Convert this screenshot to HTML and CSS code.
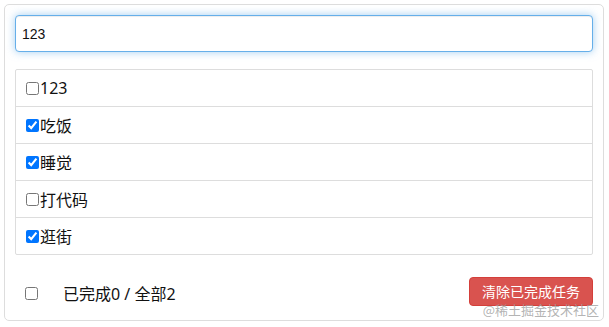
FILE: index.html
```html
<!DOCTYPE html>
<html lang="zh-CN">
<head>
    <meta charset="UTF-8">
    <meta name="viewport" content="width=device-width, initial-scale=1.0">
    <title>Todo List</title>
    <link rel="stylesheet" href="styles.css">
</head>
<body>
    <div class="todo-container">
        <div class="todo-wrap">
            <input type="text" class="todo-input" value="123">

            <ul class="todo-list">
                <li class="todo-item"><label><input type="checkbox"><span>123</span></label></li>
                <li class="todo-item"><label><input type="checkbox" checked><span>吃饭</span></label></li>
                <li class="todo-item"><label><input type="checkbox" checked><span>睡觉</span></label></li>
                <li class="todo-item"><label><input type="checkbox"><span>打代码</span></label></li>
                <li class="todo-item"><label><input type="checkbox" checked><span>逛街</span></label></li>
            </ul>

            <div class="todo-footer">
                <label class="check-all"><input type="checkbox"></label>
                <span class="count">已完成0 / 全部2</span>
                <button class="btn btn-danger">清除已完成任务</button>
            </div>
        </div>
        <span class="watermark">@稀土掘金技术社区</span>
    </div>
</body>
</html>
```

FILE: styles.css
```css
body{
    margin: 0;
    background: #fff;
    font-family: "Noto Sans", "Noto Sans CJK SC", sans-serif;
    color: #111;
}

.todo-container{
    position: relative;
    width: 600px;
    margin: 4px 0 0 4px;
}

.todo-wrap{
    border: 1px solid #ddd;
    border-radius: 5px;
    padding: 10px 10px 14px;
}

.todo-input{
    display: block;
    box-sizing: border-box;
    width: 100%;
    height: 37px;
    padding: 0 6px;
    border: 1px solid #66afe9;
    border-radius: 4px;
    outline: none;
    font-family: "Liberation Sans", Arial, sans-serif;
    font-size: 14px;
    color: #111;
    box-shadow: inset 0 1px 1px rgba(0, 0, 0, .075), 0 0 8px rgba(102, 175, 233, .6);
}

.todo-list{
    list-style: none;
    margin: 17px 0 0;
    padding: 0;
    border: 1px solid #ddd;
    border-radius: 2px;
}

.todo-item{
    height: 36px;
    display: flex;
    align-items: center;
    padding: 0 10px;
    border-bottom: 1px solid #ddd;
    font-size: 16px;
}

.todo-item:last-child{
    border-bottom: none;
}

.todo-item label{
    display: flex;
    align-items: center;
}

.todo-item input,
.check-all input{
    width: 13px;
    height: 13px;
    margin: 0 1px 0 0;
}

.todo-footer{
    display: flex;
    align-items: center;
    height: 30px;
    margin-top: 21px;
    padding-left: 10px;
}

.check-all{
    display: flex;
    margin-top: 5px;
}

.count{
    margin: 4px 0 0 24px;
    font-size: 16px;
}

.btn{
    margin-left: auto;
    height: 29px;
    padding: 0 12px;
    border-radius: 4px;
    font-family: "Noto Sans CJK SC", sans-serif;
    font-size: 14px;
    color: #fff;
    cursor: pointer;
}

.btn-danger{
    background: #d9534f;
    border: 1px solid #d43f3a;
}

.watermark{
    position: absolute;
    right: 5px;
    bottom: 5px;
    font-family: "Noto Sans CJK SC", sans-serif;
    font-size: 13px;
    line-height: 13px;
    color: rgba(160, 160, 160, .8);
    pointer-events: none;
}
```
